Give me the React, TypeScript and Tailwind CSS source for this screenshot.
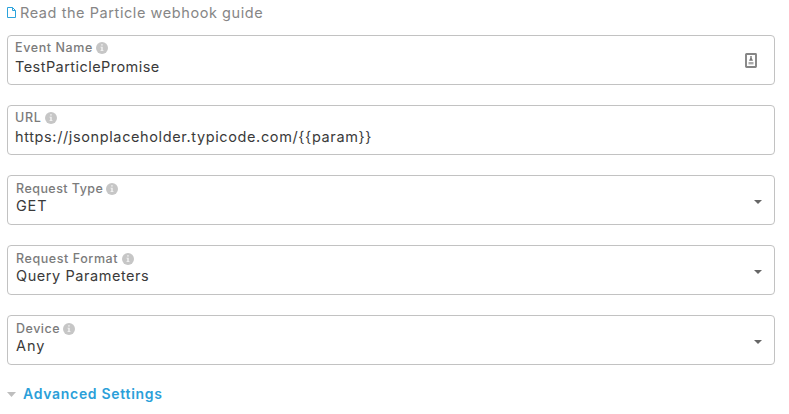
import type { ReactNode } from "react";

function InfoIcon() {
  return (
    <svg className="h-[12px] w-[12px] shrink-0" viewBox="0 0 12 12">
      <circle cx="6" cy="6" r="6" fill="#c6c6c6" />
      <path d="M5.2 2.2h1.5v1.4H5.2zM4.5 4.7h2.2v3.5h.8v.9h-3v-.9h.8V5.6h-.8z" fill="#f4f4f4" />
    </svg>
  );
}

function CredentialIcon() {
  return (
    <svg className="mr-[17px] h-[15px] w-[12px] shrink-0" viewBox="0 0 12 15">
      <rect x="1" y="1" width="10" height="13" rx="0.5" fill="#fff" stroke="#858585" strokeWidth="1.9" />
      <path d="M5.3 3h1.4v2l1.3 2.8H4l1.3-2.8z" fill="#777" />
      <path d="M3.5 9h5v2.4h-5z" fill="#aaa" />
    </svg>
  );
}

function Caret() {
  return (
    <svg className="mt-[4px] mr-[12px] h-[4px] w-[8px] shrink-0" viewBox="0 0 8 4">
      <path d="M0 0h8L4 4z" fill="#666" />
    </svg>
  );
}

type FieldProps = {
  label: string;
  labelClass: string;
  value: string;
  valueClass: string;
  bodyClass: string;
  trailing?: ReactNode;
};

function Field({ label, labelClass, value, valueClass, bodyClass, trailing }: FieldProps) {
  return (
    <div className="flex h-[50px] w-[768px] items-center justify-between rounded-[4px] border border-[#c2c2c2] bg-white">
      <div className={`flex h-full flex-col ${bodyClass}`}>
        <div className="flex h-[14px] items-center">
          <span className={`whitespace-nowrap text-[12.5px] leading-[14px] font-medium text-[#7b7b7b] ${labelClass}`}>{label}</span>
          <InfoIcon />
        </div>
        <span className={`whitespace-nowrap text-[14.5px] text-[#3a3a3a] ${valueClass}`}>{value}</span>
      </div>
      {trailing}
    </div>
  );
}

export default function App() {
  return (
    <main className="h-[414px] w-[789px] overflow-hidden bg-white pl-[7px] font-['Inter',sans-serif]">
      <a className="flex h-[35px] items-start pt-[4px] text-[#868686]">
        <svg className="mt-[3px] mr-[4px] h-[11px] w-[9px] shrink-0" viewBox="0 0 9 11">
          <path d="M.5.5h5l3 3v7h-8zM5.5.5v3h3" fill="none" stroke="#2ba3dc" />
        </svg>
        <span className="whitespace-nowrap text-[14.5px] leading-[18px] tracking-[0.57px]">Read the Particle webhook guide</span>
      </a>
      <div className="flex flex-col gap-5">
        <Field label="Event Name" labelClass="w-[81px] tracking-[0.6px]" value="TestParticlePromise" valueClass="leading-[24px] tracking-[0.45px]" bodyClass="pl-[7px] pt-[5px]" trailing={<CredentialIcon />} />
        <Field label="URL" labelClass="w-[30px] tracking-[0.7px]" value="https://jsonplaceholder.typicode.com/{{param}}" valueClass="leading-[24px] tracking-[0.62px]" bodyClass="pl-[7px] pt-[5px]" />
        <Field label="Request Type" labelClass="w-[90px] tracking-[0.46px]" value="GET" valueClass="leading-[20px] tracking-[0.8px]" bodyClass="pl-[8px] pt-[6px]" trailing={<Caret />} />
        <Field label="Request Format" labelClass="w-[106px] tracking-[0.57px]" value="Query Parameters" valueClass="leading-[20px] tracking-[0.56px]" bodyClass="pl-[8px] pt-[6px]" trailing={<Caret />} />
        <Field label="Device" labelClass="w-[47px] tracking-[0.5px]" value="Any" valueClass="leading-[20px] tracking-[1px]" bodyClass="pl-[8px] pt-[6px]" trailing={<Caret />} />
      </div>
      <div className="mt-[20px] flex h-[18px] items-center">
        <svg className="mr-[7px] h-[5px] w-[9px] shrink-0" viewBox="0 0 9 5">
          <path d="M0 0h9L4.5 5z" fill="#bebebe" />
        </svg>
        <span className="whitespace-nowrap text-[14px] leading-[18px] font-semibold tracking-[0.7px] text-[#2b9fd9]">Advanced Settings</span>
      </div>
    </main>
  );
}
